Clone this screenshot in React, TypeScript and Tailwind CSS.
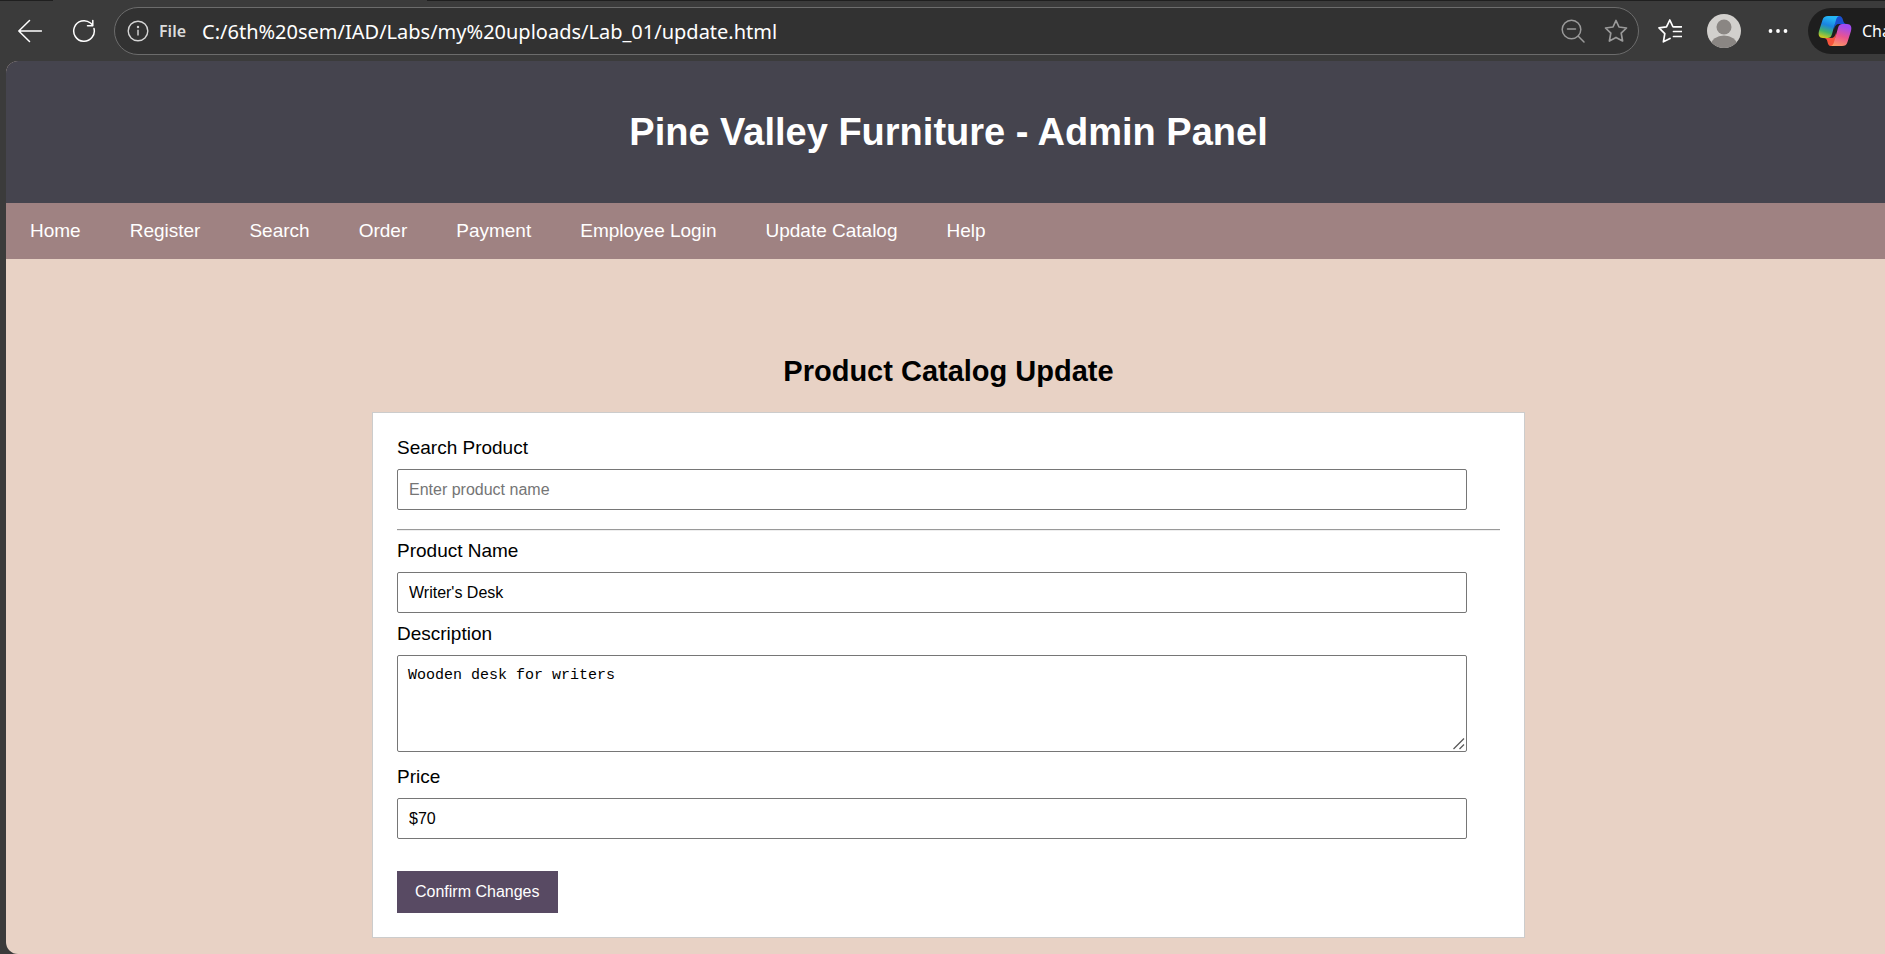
import type { ReactNode } from "react";

const links = [
  "Home",
  "Register",
  "Search",
  "Order",
  "Payment",
  "Employee Login",
  "Update Catalog",
  "Help",
];

const starPath =
  "M12 1.5 L15 8 L22.5 9 L17.2 14.2 L18.6 22 L12 18.4 L5.4 22 L6.8 14.2 L1.5 9 L9 8 Z";

function IconButton({ label, children }: { label: string; children: ReactNode }) {
  return (
    <button type="button" aria-label={label} className="flex size-6 shrink-0 items-center justify-center">
      {children}
    </button>
  );
}

function CopilotLogo() {
  return (
    <svg viewBox="0 0 34 32" className="h-8 w-[34px]" aria-hidden="true">
      <defs>
        <linearGradient id="cpLeft" x1="0.3" y1="0" x2="0" y2="1">
          <stop offset="0" stopColor="#25b5f5" />
          <stop offset="0.35" stopColor="#1a83e0" />
          <stop offset="0.65" stopColor="#43b26a" />
          <stop offset="1" stopColor="#f5d20a" />
        </linearGradient>
        <linearGradient id="cpRight" x1="0.3" y1="0" x2="0" y2="1">
          <stop offset="0" stopColor="#a24bf0" />
          <stop offset="0.45" stopColor="#ea5490" />
          <stop offset="1" stopColor="#ffa45c" />
        </linearGradient>
      </defs>
      <path d="M17 1 H21 C23.5 1 24.5 3 25 5 C25.6 7.5 26.5 9 29 9 H21 C18 9 17 11 16 14 Z" fill="#1a50d0" />
      <path d="M17 31 H13 C10.5 31 10 29 9.5 27 C9 24.5 8 23 5 23 H13 C16 23 17 21 18 18 Z" fill="#f5543c" />
      <path d="M10 1 H22 C19.5 1 18.6 3 18 5 L14 19 C13 22 12 23 9.5 23 H5 C1 23 0 20 1 16 L4.5 5 C5.5 2 7 1 10 1 Z" fill="url(#cpLeft)" />
      <path d="M24 31 H12 C14.5 31 15.4 29 16 27 L20 13 C21 10 22 9 24.5 9 H29 C33 9 34 12 33 16 L29.5 27 C28.5 30 27 31 24 31 Z" fill="url(#cpRight)" />
    </svg>
  );
}

function BrowserBar() {
  return (
    <div className="bg-[#3b3b3b] font-['Noto_Sans',sans-serif] text-white">
      <div className="flex h-px">
        <div className="w-[53px] bg-[#1f1f1f]" />
        <div className="w-[374px]" />
        <div className="flex-1 bg-[#1f1f1f]" />
      </div>
      <div className="flex h-[60px] items-center pl-[18px]">
        <IconButton label="Back">
          <svg viewBox="0 0 24 24" className="size-6" fill="none" stroke="currentColor" strokeWidth="1.5" strokeLinecap="round" strokeLinejoin="round">
            <path d="M23.5 12 H0.8 M11.5 1.5 L0.8 12 L11.5 22.5" />
          </svg>
        </IconButton>
        <div className="w-[30px]" />
        <IconButton label="Refresh">
          <svg viewBox="0 0 24 24" className="size-6" fill="none" stroke="currentColor" strokeWidth="1.5" strokeLinecap="round" strokeLinejoin="round">
            <path d="M22 9.5 A10.3 10.3 0 1 1 18.5 4 L20.8 6.3 M20.8 1.5 V6.8 H15.5" />
          </svg>
        </IconButton>
        <div className="ml-[18px] flex h-12 flex-1 items-center rounded-full border border-[#6c6c6c] bg-[#323232] pr-[10px] pl-3">
          <svg viewBox="0 0 22 22" className="size-[22px] shrink-0" fill="none" stroke="#d6d6d6" strokeWidth="1.4" aria-hidden="true">
            <circle cx="11" cy="11" r="9.8" />
            <path d="M11 9.8 V15.5" />
            <circle cx="11" cy="7" r="0.5" fill="#d6d6d6" />
          </svg>
          <span className="ml-[10px] text-base font-semibold text-[#dcdcdc]">File</span>
          <input
            aria-label="Address"
            defaultValue="C:/6th%20sem/IAD/Labs/my%20uploads/Lab_01/update.html"
            className="ml-4 h-10 min-w-0 flex-1 bg-transparent text-xl outline-none"
          />
          <div className="flex gap-[19px] text-[#9a9a9a]">
            <IconButton label="Zoom out">
              <svg viewBox="0 0 24 24" className="size-6" fill="none" stroke="currentColor" strokeWidth="1.5" strokeLinecap="round">
                <circle cx="10.5" cy="10.5" r="9.3" />
                <path d="M6.5 10 H14.5 M17.3 17.3 L23 23" />
              </svg>
            </IconButton>
            <IconButton label="Add to favorites">
              <svg viewBox="0 0 24 24" className="size-6" fill="none" stroke="currentColor" strokeWidth="1.7" strokeLinejoin="round">
                <path d={starPath} />
              </svg>
            </IconButton>
          </div>
        </div>
        <div className="ml-[19px] flex items-center">
          <IconButton label="Favorites">
            <svg viewBox="0 0 24 24" className="size-6" fill="none" stroke="currentColor" strokeWidth="1.7" strokeLinecap="round" strokeLinejoin="round">
              <path d="M12 19.5 L5.4 22.8 L6.8 14.6 L1 8.8 L8.5 7.8 L11.8 1 L14.8 7.5 M15.5 7.8 H23.5 M15.5 12.5 H23.5 M15.5 17.5 H23.5" />
            </svg>
          </IconButton>
          <button type="button" aria-label="Profile" className="ml-[25px]">
            <svg viewBox="0 0 34 34" className="size-[34px]">
              <clipPath id="avatar">
                <circle cx="17" cy="17" r="17" />
              </clipPath>
              <g clipPath="url(#avatar)">
                <rect width="34" height="34" fill="#d2d0cd" />
                <circle cx="17" cy="13" r="7.5" fill="#8a8683" />
                <ellipse cx="17" cy="31" rx="13" ry="9.5" fill="#8a8683" />
              </g>
            </svg>
          </button>
          <button type="button" aria-label="Settings and more" className="ml-[27px]">
            <svg viewBox="0 0 20 6" className="h-[6px] w-5" fill="currentColor">
              <circle cx="2.5" cy="3" r="1.9" />
              <circle cx="10" cy="3" r="1.9" />
              <circle cx="17.5" cy="3" r="1.9" />
            </svg>
          </button>
          <button
            type="button"
            className="ml-5 flex h-[46px] w-[77px] items-center gap-[10px] overflow-hidden rounded-l-full bg-[#1e1e1e] pl-[10px] text-base"
          >
            <span className="shrink-0">
              <CopilotLogo />
            </span>
            Chat
          </button>
        </div>
      </div>
    </div>
  );
}

const inputClass =
  "block h-[41px] w-[97%] rounded-xs border border-[#767676] bg-white px-[11px] text-base text-black placeholder:text-[#757575]";
const labelClass = "mb-[10px] block text-[19px] leading-[22px]";

function CatalogForm() {
  return (
    <form
      onSubmit={(e) => e.preventDefault()}
      className="mx-auto w-full max-w-[1153px] border border-[#cccccc] bg-white p-6"
    >
      <label htmlFor="search" className={labelClass}>Search Product</label>
      <input id="search" type="text" placeholder="Enter product name" className={inputClass} />

      <hr className="mt-[19px] mb-[9px] border-t border-b border-t-[#9a9a9a] border-b-[#eeeeee]" />

      <label htmlFor="name" className={labelClass}>Product Name</label>
      <input id="name" type="text" defaultValue="Writer's Desk" className={inputClass} />

      <label htmlFor="description" className={`mt-[10px] ${labelClass}`}>Description</label>
      <div className="relative w-[97%]">
        <textarea
          id="description"
          defaultValue="Wooden desk for writers"
          className="block h-[97px] w-full resize-none rounded-xs border border-[#767676] bg-white p-[10px] font-['Liberation_Mono',monospace] text-[15px] leading-5 text-black"
        />
        <svg
          viewBox="0 0 12 12"
          className="pointer-events-none absolute right-[2px] bottom-[2px] size-3"
          stroke="#5a5a5a"
          strokeWidth="1.3"
          aria-hidden="true"
        >
          <path d="M0.5 11 L11 0.5 M6.5 11 L11 6.5" />
        </svg>
      </div>

      <label htmlFor="price" className={`mt-[14px] ${labelClass}`}>Price</label>
      <input id="price" type="text" defaultValue="$70" className={inputClass} />

      <button type="submit" className="mt-8 block h-[42px] bg-[#584a63] px-[18px] text-base text-white">
        Confirm Changes
      </button>
    </form>
  );
}

function App() {
  return (
    <div className="flex min-h-screen flex-col overflow-hidden bg-[#3b3b3b]">
      <BrowserBar />
      <div className="-mr-[6px] ml-[6px] flex-1 overflow-hidden rounded-l-xl bg-[#e8d2c5] font-['Liberation_Sans',Arial,sans-serif] text-black">
        <header className="bg-[#45444e] py-12 text-center text-white">
          <h1 className="text-[38px] leading-[46px] font-bold">Pine Valley Furniture - Admin Panel</h1>
        </header>
        <nav className="flex h-14 items-center gap-[49px] bg-[#9f8282] px-6 text-[19px] text-white">
          {links.map((link) => (
            <a key={link} href="#">{link}</a>
          ))}
        </nav>
        <main className="px-6 pt-24 pb-4">
          <h2 className="mb-[25px] text-center text-[29px] leading-8 font-bold">Product Catalog Update</h2>
          <CatalogForm />
        </main>
      </div>
    </div>
  );
}

export default App;
